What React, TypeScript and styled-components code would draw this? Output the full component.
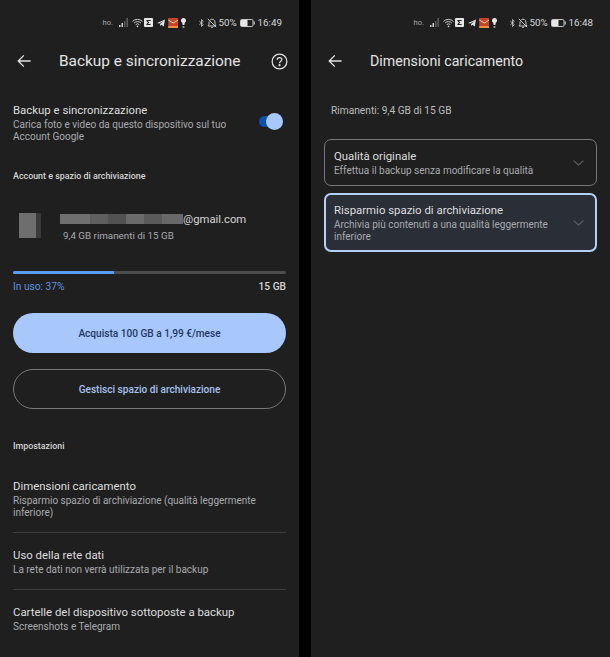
import React from 'react'
import styled, { createGlobalStyle } from 'styled-components'

const GlobalStyle = createGlobalStyle`
  html, body {
    margin: 0;
    padding: 0;
    background: #000;
  }
  * {
    box-sizing: border-box;
  }
`

const Page = styled.div`
  width: 610px;
  height: 657px;
  display: flex;
  justify-content: space-between;
  overflow: hidden;
  background: #000;
  font-family: Roboto, 'Liberation Sans', sans-serif;
`
const Phone = styled.div`
  width: 299px;
  height: 657px;
  background: #1f1f1f;
  color: #e3e3e3;
  overflow: hidden;
`
const StatusBar = styled.div`
  height: 44px;
  padding: 1px 17px 0 0;
  display: flex;
  align-items: center;
  justify-content: flex-end;
  color: #d8d8d8;
`
const Carrier = styled.span`
  font-size: 7.5px;
  color: #a8a8a8;
  margin-right: 6px;
`
const StatusIcon = styled.svg<{ gap?: number }>`
  display: block;
  flex: none;
  margin-right: ${({ gap }) => gap ?? 3}px;
`
const Percent = styled.span`
  font-size: 9.8px;
  margin-left: 1px;
  margin-right: 3px;
`
const Clock = styled.span`
  font-size: 9.8px;
`
const Toolbar = styled.div`
  height: 34px;
  padding: 0 11px 0 17px;
  display: flex;
  align-items: center;
`
const Title = styled.h1<{ size: number }>`
  margin: 0 0 0 28px;
  flex: 1;
  font-size: ${({ size }) => size}px;
  font-weight: 400;
  color: #e3e3e3;
  white-space: nowrap;
`
const Body = styled.div`
  padding: 0 13px;
`
const ToggleRow = styled.div`
  margin-top: 24px;
  display: flex;
  align-items: center;
  justify-content: space-between;
`
const RowTitle = styled.div`
  font-size: 11.4px;
  line-height: 16px;
  color: #dedede;
  white-space: nowrap;
`
const RowText = styled.div`
  margin-top: 1px;
  font-size: 10px;
  line-height: 12px;
  color: #a9abae;
`
const ToggleTrack = styled.div`
  position: relative;
  width: 24px;
  height: 11px;
  margin: 0 3px 2px 0;
  border-radius: 6px;
  background: #0b4fb0;
`
const ToggleKnob = styled.div`
  position: absolute;
  right: 0;
  top: -3px;
  width: 17px;
  height: 17px;
  border-radius: 50%;
  background: #a8c7fa;
`
const SectionLabel = styled.div<{ top: number }>`
  margin-top: ${({ top }) => top}px;
  font-size: 8.9px;
  line-height: 12px;
  font-weight: 500;
  color: #d4d4d4;
`
const AccountRow = styled.div`
  margin-top: 29px;
  padding-left: 6px;
  display: flex;
  align-items: flex-start;
`
const Avatar = styled.div`
  width: 22px;
  height: 25px;
  margin-top: 2px;
  background: linear-gradient(90deg, #6e6e6e 0 17px, #3a3a3a 17px 22px);
`
const AccountText = styled.div`
  margin-left: 19px;
`
const Email = styled.div`
  display: flex;
  align-items: center;
  height: 16px;
  font-size: 11.3px;
  color: #d6d6d6;
`
const BlurTile = styled.span<{ width: number; shade: string }>`
  width: ${({ width }) => width}px;
  height: 10px;
  background: ${({ shade }) => shade};
`
const Quota = styled.div`
  margin: 2px 0 0 3px;
  font-size: 9.8px;
  line-height: 14px;
  color: #a9abae;
`
const ProgressTrack = styled.div`
  margin-top: 28px;
  height: 3px;
  border-radius: 2px;
  background: #4b4c4e;
  overflow: hidden;
`
const ProgressFill = styled.div`
  height: 100%;
  background: #5b9bf0;
`
const UsageRow = styled.div`
  margin-top: 7px;
  display: flex;
  justify-content: space-between;
  font-size: 10.2px;
  line-height: 12px;
`
const UsageLabel = styled.span`
  color: #5f94dd;
`
const UsageTotal = styled.span`
  font-weight: 500;
  color: #d6d6d6;
`
const PillButton = styled.div<{ filled?: boolean }>`
  height: 40px;
  margin-top: ${({ filled }) => (filled ? 20 : 16)}px;
  border-radius: 20px;
  display: flex;
  align-items: center;
  justify-content: center;
  font-size: 10.1px;
  font-weight: 500;
  background: ${({ filled }) => (filled ? '#a8c7fa' : 'transparent')};
  color: ${({ filled }) => (filled ? '#1f3763' : '#a8c2f0')};
  border: ${({ filled }) => (filled ? 'none' : '1px solid #77787b')};
`
const SettingRow = styled.div<{ top: number; divided?: boolean }>`
  margin-top: ${({ top }) => top}px;
  padding-bottom: ${({ divided }) => (divided ? 13 : 0)}px;
  border-bottom: ${({ divided }) => (divided ? '1px solid #3c3d3f' : 'none')};
`
const RemainingText = styled.div`
  margin: 26px 0 0 20px;
  font-size: 10.2px;
  line-height: 14px;
  color: #bdbdbd;
`
const OptionList = styled.div`
  margin: 21px 13px 0;
  display: flex;
  flex-direction: column;
  gap: 7px;
`
const Option = styled.div<{ selected?: boolean }>`
  min-height: ${({ selected }) => (selected ? 59 : 47)}px;
  padding: 0 ${({ selected }) => (selected ? '11px 0 8px' : '12px 0 9px')};
  display: flex;
  align-items: center;
  justify-content: space-between;
  border-radius: 7px;
  border: ${({ selected }) => (selected ? '2px solid #b4cff8' : '1px solid #77787b')};
  background: ${({ selected }) => (selected ? '#2a2e37' : 'transparent')};
`
const OptionText = styled.div`
  width: 225px;
`

function BackArrow() {
  return (
    <svg width="14" height="14" viewBox="0 0 14 14" fill="none" stroke="#e3e3e3" strokeWidth="1.3">
      <path d="M13.6 7H1.2M6.8 1.4 1.2 7l5.6 5.6" />
    </svg>
  )
}

function HelpIcon() {
  return (
    <svg width="17" height="17" viewBox="0 0 18 18" fill="none" stroke="#e3e3e3" strokeWidth="1.3">
      <circle cx="9" cy="9" r="7.8" />
      <path d="M6.5 7.2c0-1.5 1.1-2.4 2.5-2.4s2.5.9 2.5 2.2c0 1.7-2.5 1.8-2.5 3.8" />
      <circle cx="9" cy="12.9" r=".5" fill="#e3e3e3" />
    </svg>
  )
}

function Chevron() {
  return (
    <svg width="11" height="6" viewBox="0 0 11 6" fill="none" stroke="#5f6063" strokeWidth="1.1">
      <path d="M.6.6 5.5 5 10.4.6" />
    </svg>
  )
}

function StatusIcons({ time }: { time: string }) {
  return (
    <StatusBar>
      <Carrier>ho.</Carrier>
      <StatusIcon width="9" height="9" viewBox="0 0 9 9" gap={4}>
        <path d="M0 9V7h1.5v2zM2.5 9V5H4v4z" fill="#d0d0d0" />
        <path d="M5 9V3h1.5v6zM7.5 9V0H9v9z" fill="#5c5c5c" />
      </StatusIcon>
      <StatusIcon width="11" height="10" viewBox="0 0 12 10" fill="none" stroke="#d8d8d8" gap={1.5}>
        <path d="M.6 3.2a7.8 7.8 0 0 1 10.8 0M2.3 5a5.3 5.3 0 0 1 7.4 0M4 6.8a2.9 2.9 0 0 1 4 0" strokeWidth="1" />
        <circle cx="6" cy="8.7" r=".9" fill="#d8d8d8" stroke="none" />
      </StatusIcon>
      <StatusIcon width="9" height="9" viewBox="0 0 9 9" gap={4}>
        <rect width="9" height="9" rx="1" fill="#e6e6e6" />
        <path d="M2.4 2h4.2v1H3.9l1.4 1.5-1.4 1.5h2.7v1H2.4v-.9L4 4.5 2.4 2.9z" fill="#222" />
      </StatusIcon>
      <StatusIcon width="8" height="8" viewBox="0 0 9 8" gap={2.5}>
        <path d="M0 3.9 9 0 7.6 8 4.9 6 3.6 7.3 3.4 5.1 7 1.7 2.4 4.7z" fill="#e0e0e0" />
      </StatusIcon>
      <StatusIcon width="10.5" height="10" viewBox="0 0 10 10" gap={3}>
        <rect width="10" height="10" fill="#c9432b" />
        <path d="M0 2 5 5l5-3" fill="none" stroke="#f3d9a0" strokeWidth="1" />
        <rect y="8" width="10" height="2" fill="#e8913a" />
      </StatusIcon>
      <StatusIcon width="5" height="10" viewBox="0 0 5 10" gap={13}>
        <path d="M2.5 0a2.5 2.5 0 0 1 1.4 4.6L3.3 7H1.7L1.1 4.6A2.5 2.5 0 0 1 2.5 0z" fill="#e6e6e6" />
        <rect x="1.6" y="8" width="1.8" height="2" fill="#9a9a9a" />
      </StatusIcon>
      <StatusIcon width="5" height="10" viewBox="0 0 6 10" fill="none" stroke="#d8d8d8" strokeWidth=".9" gap={3}>
        <path d="M.4 2.8 5.2 7 3 9.2V.8L5.2 3 .4 7.2" />
      </StatusIcon>
      <StatusIcon width="10" height="10" viewBox="0 0 10 10" fill="none" stroke="#d8d8d8" strokeWidth=".9" gap={0}>
        <path d="M1 8h8L8 6.5V4.2A3 3 0 0 0 3.2 1.8M2.1 3.4 2 6.5 1 8M4 9.3h2M.8.8l8.4 8.4" />
      </StatusIcon>
      <Percent>50%</Percent>
      <StatusIcon width="15" height="8" viewBox="0 0 15 8" gap={3}>
        <rect x=".5" y=".5" width="12.5" height="7" rx="1.2" fill="none" stroke="#c8c8c8" />
        <rect x="1" y="1" width="6.5" height="6" fill="#e6e6e6" />
        <rect x="13.6" y="2.5" width="1.2" height="3" fill="#c8c8c8" />
      </StatusIcon>
      <Clock>{time}</Clock>
    </StatusBar>
  )
}

const BLUR_TILES = [
  { width: 30, shade: '#6f6f6f' },
  { width: 18, shade: '#5f5f5f' },
  { width: 18, shade: '#525252' },
  { width: 18, shade: '#6a6a6a' },
  { width: 18, shade: '#5a5a5a' },
  { width: 21, shade: '#686868' }
]

function BackupScreen() {
  return (
    <Phone>
      <StatusIcons time="16:49" />
      <Toolbar>
        <BackArrow />
        <Title size={15.4}>Backup e sincronizzazione</Title>
        <HelpIcon />
      </Toolbar>
      <Body>
        <ToggleRow>
          <div>
            <RowTitle>Backup e sincronizzazione</RowTitle>
            <RowText>
              Carica foto e video da questo dispositivo sul tuo
              <br />
              Account Google
            </RowText>
          </div>
          <ToggleTrack>
            <ToggleKnob />
          </ToggleTrack>
        </ToggleRow>
        <SectionLabel top={27}>Account e spazio di archiviazione</SectionLabel>
        <AccountRow>
          <Avatar />
          <AccountText>
            <Email>
              {BLUR_TILES.map((tile, i) => (
                <BlurTile key={i} width={tile.width} shade={tile.shade} />
              ))}
              @gmail.com
            </Email>
            <Quota>9,4 GB rimanenti di 15 GB</Quota>
          </AccountText>
        </AccountRow>
        <ProgressTrack>
          <ProgressFill style={{ width: '37%' }} />
        </ProgressTrack>
        <UsageRow>
          <UsageLabel>In uso: 37%</UsageLabel>
          <UsageTotal>15 GB</UsageTotal>
        </UsageRow>
        <PillButton filled>Acquista 100 GB a 1,99 €/mese</PillButton>
        <PillButton>Gestisci spazio di archiviazione</PillButton>
        <SectionLabel top={31}>Impostazioni</SectionLabel>
        <SettingRow top={26} divided>
          <RowTitle>Dimensioni caricamento</RowTitle>
          <RowText>
            Risparmio spazio di archiviazione (qualità leggermente
            <br />
            inferiore)
          </RowText>
        </SettingRow>
        <SettingRow top={14} divided>
          <RowTitle>Uso della rete dati</RowTitle>
          <RowText>La rete dati non verrà utilizzata per il backup</RowText>
        </SettingRow>
        <SettingRow top={14}>
          <RowTitle>Cartelle del dispositivo sottoposte a backup</RowTitle>
          <RowText>Screenshots e Telegram</RowText>
        </SettingRow>
      </Body>
    </Phone>
  )
}

function UploadSizeScreen() {
  return (
    <Phone>
      <StatusIcons time="16:48" />
      <Toolbar>
        <BackArrow />
        <Title size={14.2}>Dimensioni caricamento</Title>
      </Toolbar>
      <RemainingText>Rimanenti: 9,4 GB di 15 GB</RemainingText>
      <OptionList>
        <Option>
          <OptionText>
            <RowTitle>Qualità originale</RowTitle>
            <RowText>Effettua il backup senza modificare la qualità</RowText>
          </OptionText>
          <Chevron />
        </Option>
        <Option selected>
          <OptionText>
            <RowTitle>Risparmio spazio di archiviazione</RowTitle>
            <RowText>Archivia più contenuti a una qualità leggermente inferiore</RowText>
          </OptionText>
          <Chevron />
        </Option>
      </OptionList>
    </Phone>
  )
}

export default function App() {
  return (
    <>
      <GlobalStyle />
      <Page>
        <BackupScreen />
        <UploadSizeScreen />
      </Page>
    </>
  )
}
